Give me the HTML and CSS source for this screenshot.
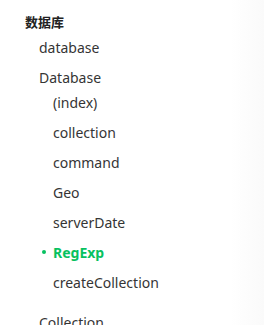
FILE: index.html
```html
<!DOCTYPE html>
<html lang="zh">
<head>
<meta charset="utf-8">
<link rel="stylesheet" href="styles.css">
</head>
<body>
<nav class="toc">
  <div class="toc-title">数据库</div>
  <ul class="toc-list">
    <li class="toc-item"><a class="toc-link">database</a></li>
    <li class="toc-item">
      <a class="toc-link">Database</a>
      <ul class="toc-sub">
        <li class="toc-item"><a class="toc-link">(index)</a></li>
        <li class="toc-item"><a class="toc-link">collection</a></li>
        <li class="toc-item"><a class="toc-link">command</a></li>
        <li class="toc-item"><a class="toc-link">Geo</a></li>
        <li class="toc-item"><a class="toc-link">serverDate</a></li>
        <li class="toc-item"><a class="toc-link active">RegExp</a></li>
        <li class="toc-item"><a class="toc-link">createCollection</a></li>
      </ul>
    </li>
    <li class="toc-item"><a class="toc-link">Collection</a></li>
  </ul>
</nav>
</body>
</html>
```
FILE: styles.css
```css
html, body {
  margin: 0;
  padding: 0;
}
body {
  width: 264px;
  height: 325px;
  overflow: hidden;
  background: linear-gradient(to right, #ffffff 0, #ffffff 230px, #fafafa 264px);
  font-family: "Noto Sans", "Noto Sans CJK SC", sans-serif;
  color: #353535;
}
.toc {
  padding: 11px 0 0 25px;
}
.toc-title {
  font-family: "Noto Sans CJK SC", sans-serif;
  font-weight: 700;
  font-size: 13px;
  line-height: 21px;
  color: #222;
}
.toc-list, .toc-sub {
  list-style: none;
  margin: 0;
  padding: 0;
}
.toc-list {
  padding-left: 14px;
}
.toc-sub {
  padding-left: 14px;
  margin-top: -5px;
  padding-bottom: 10px;
}
.toc-link {
  display: flex;
  align-items: center;
  height: 30px;
  font-size: 14px;
  white-space: nowrap;
}
.toc-link.active {
  color: #07c160;
  font-weight: 700;
  margin-left: -11px;
  gap: 7px;
}
.toc-link.active::before {
  content: "";
  width: 4px;
  height: 4px;
  border-radius: 50%;
  background: #07c160;
}
```
